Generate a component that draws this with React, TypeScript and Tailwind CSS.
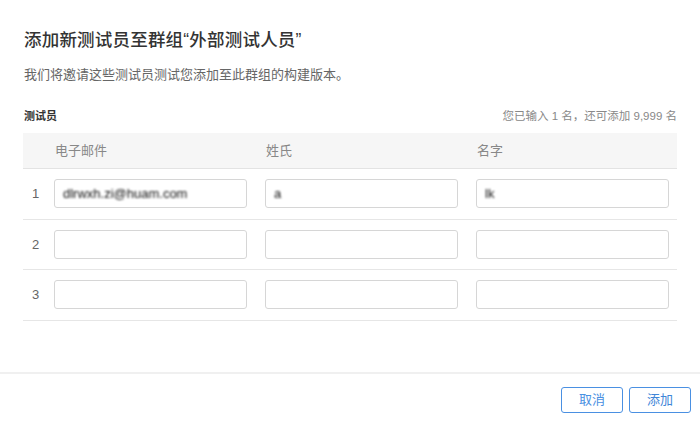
import React from "react";

const font = { fontFamily: '"Liberation Sans", "Noto Sans CJK SC", sans-serif' };

const rows = [
  { email: "dlrwxh.zi@huam.com", last: "a", first: "lk" },
  { email: "", last: "", first: "" },
  { email: "", last: "", first: "" },
];

function Field({ value }: { value: string }) {
  return (
    <div className="h-[29px] w-[193px] shrink-0 rounded-[3px] border border-[#d6d6d6] bg-white px-[8px] flex items-center text-[13px] text-[#111]">
      {value && <span className="blur-[0.8px]">{value}</span>}
    </div>
  );
}

export default function App() {
  return (
    <div className="w-[700px] h-[423px] bg-white flex flex-col text-[#333]" style={font}>
      <div className="flex-1 px-[23px] pt-[27px]">
        <h1 className="text-[17.5px] font-medium leading-[26px] text-[#333] pl-[1px] tracking-[0.2px]">
          添加新测试员至群组<span className="font-[Liberation_Sans]">“</span>外部测试人员<span className="font-[Liberation_Sans]">”</span>
        </h1>
        <p className="mt-[13px] text-[13px] leading-[18px] text-[#666] pl-[1px]">我们将邀请这些测试员测试您添加至此群组的构建版本。</p>
        <div className="mt-[24px] flex items-end justify-between text-[11px] leading-[16px]">
          <span className="font-bold text-[#333] pl-[1px]">测试员</span>
          <span className="text-[11.5px] text-[#888]">您已输入 1 名，还可添加 9,999 名</span>
        </div>
        <div className="mt-[9px]">
          <div className="h-[36px] bg-[#f6f6f6] border-b border-[#e3e3e3] flex items-center text-[13px] text-[#888]">
            <span className="w-[32px] shrink-0" />
            <span className="w-[211px] shrink-0">电子邮件</span>
            <span className="w-[211px] shrink-0">姓氏</span>
            <span>名字</span>
          </div>
          {rows.map((r, i) => (
            <div key={i} className="h-[50.5px] border-b border-[#e6e6e6] flex items-center text-[13px] text-[#666]">
              <span className="w-[31px] shrink-0 pl-[9px]">{i + 1}</span>
              <div className="flex gap-[18px]">
                <Field value={r.email} />
                <Field value={r.last} />
                <Field value={r.first} />
              </div>
            </div>
          ))}
        </div>
      </div>
      <div className="h-[51px] border-t-2 border-[#f0f0f0] flex items-start justify-end gap-[6px] pt-[13px] pr-[9px]">
        <button className="h-[26px] w-[62px] rounded-[3px] border border-[#4a90e2] text-[#4a90e2] text-[13px] bg-white">取消</button>
        <button className="h-[26px] w-[62px] rounded-[3px] border border-[#4a90e2] text-[#3f86d8] text-[13px] bg-white">添加</button>
      </div>
    </div>
  );
}
